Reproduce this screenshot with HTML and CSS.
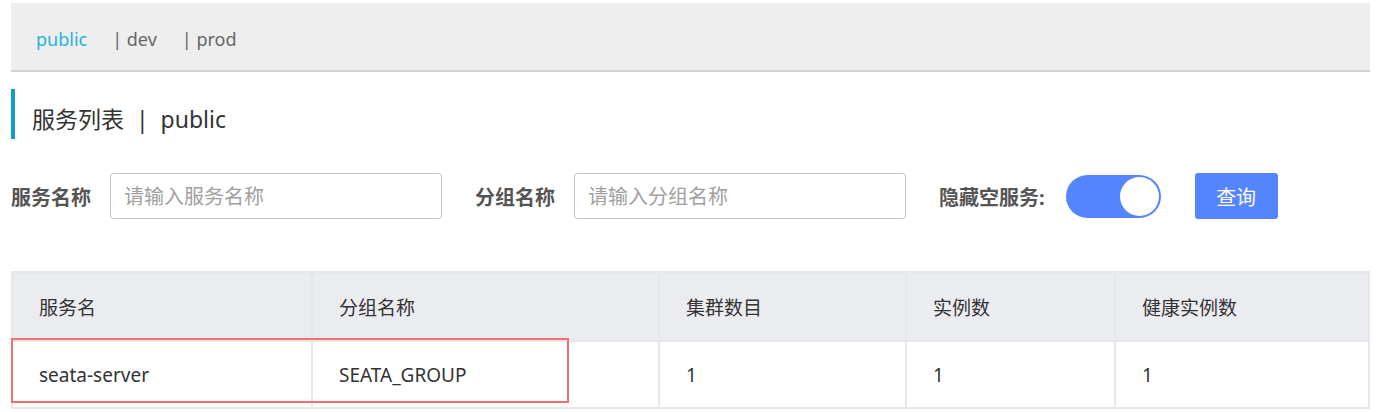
FILE: index.html
```html
<!DOCTYPE html>
<html lang="zh-CN">
<head>
    <meta charset="UTF-8">
    <meta name="viewport" content="width=device-width, initial-scale=1.0">
    <title>服务列表</title>
    <link rel="stylesheet" href="styles.css">
</head>
<body>
<div class="page">
    <div class="nav">
        <span class="nav-item active">public</span>
        <span class="nav-item">| dev</span>
        <span class="nav-item">| prod</span>
    </div>

    <h1 class="title">服务列表 &nbsp;|&nbsp; public</h1>

    <div class="filter">
        <label class="label">服务名称</label>
        <input class="input" type="text" placeholder="请输入服务名称">
        <label class="label">分组名称</label>
        <input class="input" type="text" placeholder="请输入分组名称">
        <label class="label">隐藏空服务:</label>
        <div class="switch"><div class="knob"></div></div>
        <button class="btn">查询</button>
    </div>

    <div class="table-wrap">
        <table class="table">
            <thead>
                <tr>
                    <th class="c1">服务名</th>
                    <th class="c2">分组名称</th>
                    <th class="c3">集群数目</th>
                    <th class="c4">实例数</th>
                    <th>健康实例数</th>
                </tr>
            </thead>
            <tbody>
                <tr>
                    <td>seata-server</td>
                    <td>SEATA_GROUP</td>
                    <td>1</td>
                    <td>1</td>
                    <td>1</td>
                </tr>
            </tbody>
        </table>
        <!-- 标注框 -->
        <div class="mark"></div>
    </div>
</div>
</body>
</html>
```

FILE: styles.css
```css
body {
    margin: 0;
    font-family: "Noto Sans", "Noto Sans CJK SC", sans-serif;
    color: #333;
    background: #fff;
}
.page {
    padding: 3px 8px 0 11px;
}
.nav {
    height: 67px;
    background: #eeeeee;
    border-bottom: 2px solid #d2d2d2;
    display: flex;
    align-items: center;
    box-sizing: content-box;
    padding-left: 25px;
    font-size: 18px;
    color: #666;
}
.nav-item {
    margin-right: 25px;
    padding-top: 5px;
}
.nav-item.active {
    color: #1fb3dd;
}
.title {
    margin: 17px 0 0 0;
    height: 50px;
    box-sizing: border-box;
    border-left: 4px solid #139bd0;
    padding: 7px 0 0 17px;
    display: flex;
    align-items: center;
    font-size: 23px;
    font-weight: 400;
    color: #333;
}
.filter {
    margin-top: 34px;
    height: 46px;
    display: flex;
    align-items: center;
}
.label {
    font-size: 20px;
    font-weight: bold;
    color: #555;
    margin-right: 19px;
}
.input {
    width: 332px;
    height: 46px;
    box-sizing: border-box;
    border: 1px solid #c4c6cf;
    border-radius: 3px;
    padding: 0 13px;
    font-family: inherit;
    font-size: 20px;
    margin-right: 33px;
    outline: none;
}
.input::placeholder {
    color: #a0a0a0;
}
.switch {
    width: 95px;
    height: 43px;
    border-radius: 22px;
    background: #5584ff;
    box-sizing: border-box;
    padding: 2px;
    display: flex;
    justify-content: flex-end;
    margin-left: 2px;
    margin-right: 34px;
}
.knob {
    width: 39px;
    height: 39px;
    border-radius: 50%;
    background: #fff;
}
.btn {
    width: 83px;
    height: 46px;
    border: none;
    border-radius: 3px;
    background: #5584ff;
    color: #fff;
    font-family: inherit;
    font-size: 20px;
}
.table-wrap {
    position: relative;
    margin-top: 52px;
}
.table {
    width: 100%;
    border-collapse: collapse;
    font-size: 19px;
    color: #333;
}
.table th, .table td {
    border: 2px solid #e6e7eb;
    text-align: left;
    padding: 0 26px;
}
.table th {
    background: #ebecf0;
    font-weight: 400;
    height: 67px;
}
.table td {
    height: 65px;
}
.c1 { width: 246px; }
.c2 { width: 293px; }
.c3 { width: 193px; }
.c4 { width: 155px; }
.mark {
    position: absolute;
    left: 0;
    top: 67px;
    width: 558px;
    height: 65px;
    box-sizing: border-box;
    border: 2px solid #f46e6e;
}
```
